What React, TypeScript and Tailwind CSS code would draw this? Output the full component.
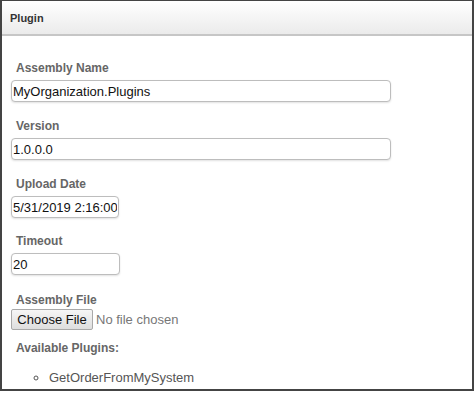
const font = { fontFamily: '"Liberation Sans", Arial, sans-serif' };

function Label({ children, className = "" }: { children: React.ReactNode; className?: string }) {
  return (
    <div className={`pl-[5px] text-[12px] leading-[14px] font-bold text-[#666] ${className}`}>
      {children}
    </div>
  );
}

function TextBox({ value, width }: { value: string; width: string }) {
  return (
    <input
      readOnly
      value={value}
      className={`${width} h-[22px] mt-[5px] px-[1px] border border-[#bdbdbd] rounded-[4px] bg-white text-[13px] text-[#111] shadow-[0_1px_2px_rgba(0,0,0,0.12)] outline-none`}
      style={font}
    />
  );
}

export default function App() {
  return (
    <div className="w-[475px] h-[393px] bg-white" style={font}>
      <div className="w-[474px] h-[391px] border-2 border-t border-[#444] flex flex-col">
        <div className="h-[35px] shrink-0 bg-gradient-to-b from-white to-[#ebebeb] border-b-2 border-[#c6c6c6] flex items-center pl-[8px]">
          <span className="text-[11px] font-bold text-[#333] pt-[1px]">Plugin</span>
        </div>
        <div className="flex flex-col pl-[9px] pt-[25px]">
          <Label>Assembly Name</Label>
          <TextBox value="MyOrganization.Plugins" width="w-[380px]" />

          <Label className="mt-[17px]">Version</Label>
          <TextBox value="1.0.0.0" width="w-[380px]" />

          <Label className="mt-[17px]">Upload Date</Label>
          <TextBox value="5/31/2019 2:16:00" width="w-[108px]" />

          <Label className="mt-[16px]">Timeout</Label>
          <TextBox value="20" width="w-[109px]" />

          <Label className="mt-[18px]">Assembly File</Label>
          <div className="flex items-center mt-[2px]">
            <button className="w-[82px] h-[21px] border border-[#a9a9a9] rounded-[2px] bg-gradient-to-b from-[#f6f6f6] to-[#dedede] text-[13px] text-[#111] leading-none">
              Choose File
            </button>
            <span className="ml-[3px] text-[13px] text-[#777]">No file chosen</span>
          </div>

          <Label className="mt-[11px]">Available Plugins:</Label>
          <ul className="list-[circle] pl-[38px] mt-[15px] text-[13px] leading-[15px] text-[#555]">
            <li>GetOrderFromMySystem</li>
          </ul>
        </div>
      </div>
    </div>
  );
}
